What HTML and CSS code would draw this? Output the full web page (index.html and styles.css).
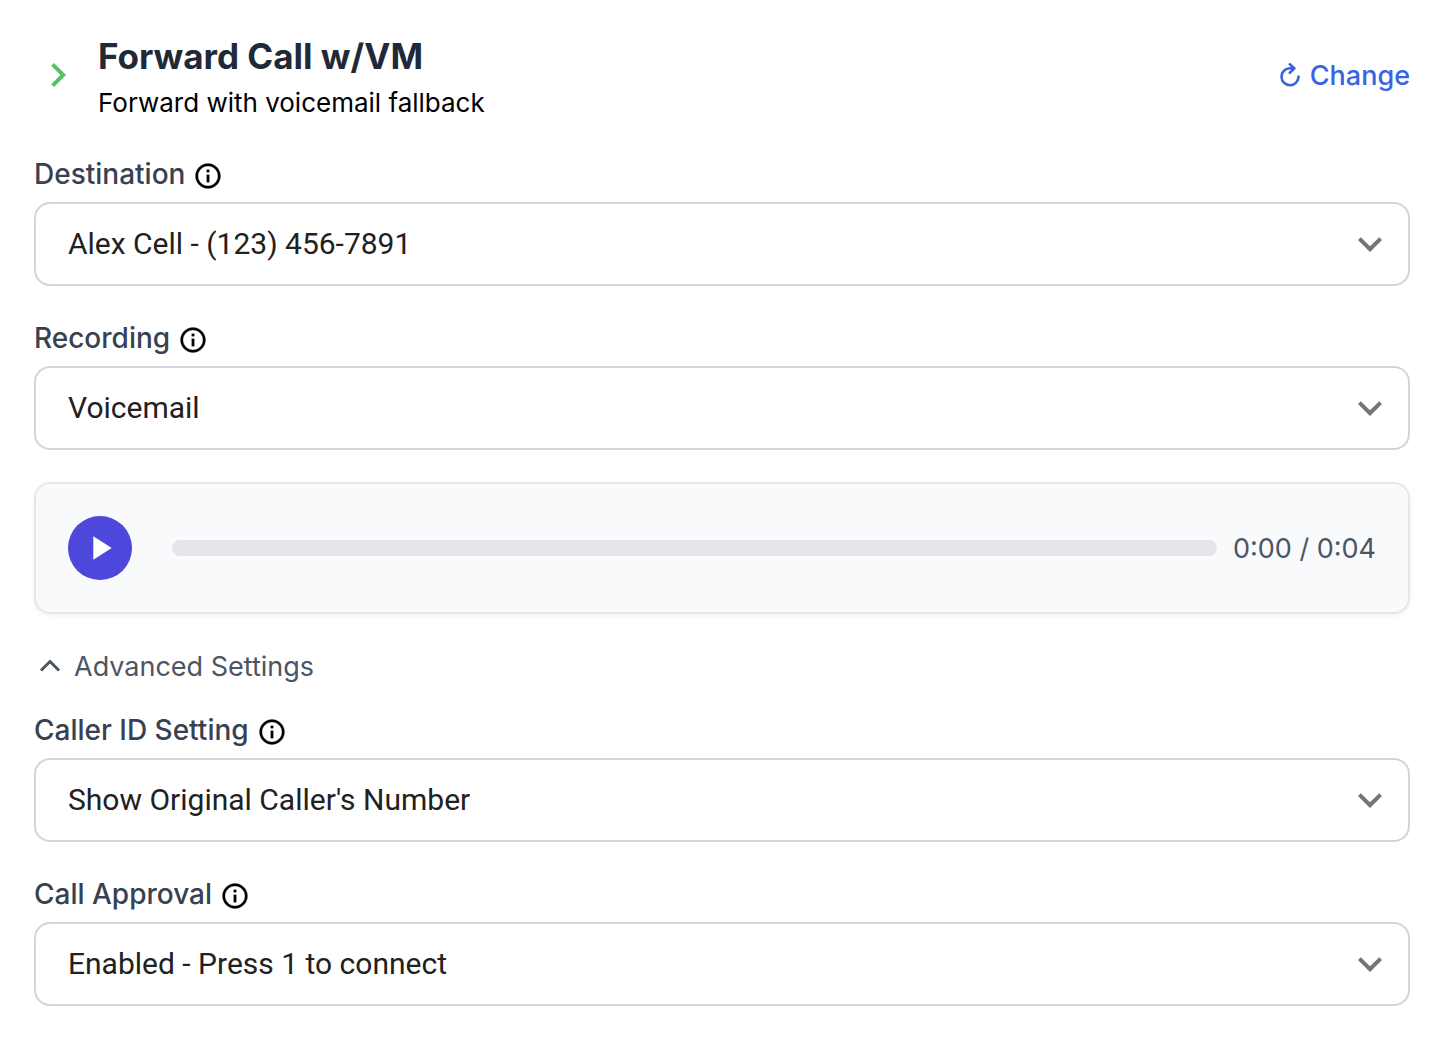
FILE: index.html
```html
<!DOCTYPE html>
<html lang="en">
<head>
    <meta charset="UTF-8">
    <meta name="viewport" content="width=device-width, initial-scale=1.0">
    <title>Forward Call w/VM</title>
    <link rel="stylesheet" href="styles.css">
</head>
<body>
    <!-- Shared icons -->
    <svg class="sprite" aria-hidden="true">
        <symbol id="icon-info" viewBox="0 0 24 24">
            <path d="M11 7h2v2h-2zm0 4h2v6h-2zm1-9C6.48 2 2 6.48 2 12s4.48 10 10 10 10-4.48 10-10S17.52 2 12 2zm0 18c-4.41 0-8-3.59-8-8s3.59-8 8-8 8 3.59 8 8-3.59 8-8 8z"/>
        </symbol>
        <symbol id="icon-expand" viewBox="0 0 24 24">
            <path d="M16.59 8.59L12 13.17 7.41 8.59 6 10l6 6 6-6z"/>
        </symbol>
    </svg>

    <main class="panel">
        <!-- Header -->
        <header class="header">
            <svg class="header-arrow" viewBox="0 0 24 24" aria-hidden="true"><path d="M10 6L8.59 7.41 13.17 12l-4.58 4.59L10 18l6-6z"/></svg>
            <div class="header-text">
                <h1>Forward Call w/VM</h1>
                <p>Forward with voicemail fallback</p>
            </div>
            <button class="change-button" type="button">
                <svg viewBox="0 0 20 24" aria-hidden="true"><path d="M18.5 13.5A8.5 8.5 0 1 1 10 5.2H14.2M9.8 1.3L14.4 5.4L9.8 9.8"/></svg>
                Change
            </button>
        </header>

        <form class="settings">
            <div class="field">
                <div class="field-label">
                    <label for="destination">Destination</label>
                    <svg class="info-icon" aria-hidden="true"><use href="#icon-info"/></svg>
                </div>
                <div class="select-box">
                    <select id="destination">
                        <option>Alex Cell - (123) 456-7891</option>
                    </select>
                    <svg class="select-arrow" aria-hidden="true"><use href="#icon-expand"/></svg>
                </div>
            </div>

            <div class="field">
                <div class="field-label">
                    <label for="recording">Recording</label>
                    <svg class="info-icon" aria-hidden="true"><use href="#icon-info"/></svg>
                </div>
                <div class="select-box">
                    <select id="recording">
                        <option>Voicemail</option>
                    </select>
                    <svg class="select-arrow" aria-hidden="true"><use href="#icon-expand"/></svg>
                </div>
            </div>

            <!-- Recording player -->
            <div class="player">
                <button class="play-button" type="button" aria-label="Play">
                    <svg viewBox="0 0 24 24" aria-hidden="true"><path d="M8 5v14l11-7z"/></svg>
                </button>
                <input class="seek" type="range" min="0" max="4" value="0" aria-label="Seek">
                <span class="time">0:00 / 0:04</span>
            </div>

            <!-- Advanced settings -->
            <section class="advanced">
                <button class="advanced-toggle" type="button" aria-expanded="true">
                    <svg viewBox="0 0 32 32" aria-hidden="true"><path d="M7 20.5l9-9 9 9"/></svg>
                    Advanced Settings
                </button>

                <div class="field">
                    <div class="field-label">
                        <label for="caller-id">Caller ID Setting</label>
                        <svg class="info-icon" aria-hidden="true"><use href="#icon-info"/></svg>
                    </div>
                    <div class="select-box">
                        <select id="caller-id">
                            <option>Show Original Caller's Number</option>
                        </select>
                        <svg class="select-arrow" aria-hidden="true"><use href="#icon-expand"/></svg>
                    </div>
                </div>
            </section>

            <div class="field">
                <div class="field-label">
                    <label for="approval">Call Approval</label>
                    <svg class="info-icon" aria-hidden="true"><use href="#icon-info"/></svg>
                </div>
                <div class="select-box">
                    <select id="approval">
                        <option>Enabled - Press 1 to connect</option>
                    </select>
                    <svg class="select-arrow" aria-hidden="true"><use href="#icon-expand"/></svg>
                </div>
            </div>
        </form>
    </main>
</body>
</html>
```
FILE: styles.css
```css
/* Global Styles */
* {
    box-sizing: border-box;
}

body {
    margin: 0;
    background: #fff;
    color: #000;
    font-family: 'Inter', sans-serif;
    font-size: 28px;
}

button {
    border: none;
    background: none;
    padding: 0;
    font: inherit;
    cursor: pointer;
}

.sprite {
    display: none;
}

.panel {
    padding: 32px 36px 32px 34px;
}

/* Header */
.header {
    display: flex;
    align-items: center;
    gap: 16px;
    margin-bottom: 36px;
}

.header-arrow {
    width: 48px;
    height: 48px;
    flex: none;
    fill: #58c168;
}

.header-text {
    flex: 1;
}

.header h1 {
    margin: 0 0 8px;
    font-size: 35px;
    font-weight: 700;
    line-height: 48px;
    color: #1f2937;
}

.header p {
    margin: 0;
    font-size: 26px;
    line-height: 30px;
}

.change-button {
    display: flex;
    align-items: center;
    gap: 10px;
    color: #3763e4;
    font-size: 27px;
    font-weight: 500;
}

.change-button svg {
    width: 20px;
    height: 24px;
    fill: none;
    stroke: #3763e4;
    stroke-width: 2.6;
    stroke-linecap: round;
    stroke-linejoin: round;
}

/* Fields */
.settings {
    display: flex;
    flex-direction: column;
    gap: 32px;
}

.field {
    display: flex;
    flex-direction: column;
    gap: 8px;
}

.field-label {
    display: flex;
    align-items: center;
    gap: 8px;
    height: 40px;
    color: #374151;
    font-weight: 500;
}

.info-icon {
    width: 30px;
    height: 30px;
    margin-top: 4px;
    fill: #000;
    stroke: #000;
    stroke-width: 0.2;
}

.select-box {
    position: relative;
}

.select-box select {
    display: block;
    width: 100%;
    height: 84px;
    padding: 0 80px 2px 32px;
    border: 2px solid #d1d5db;
    border-radius: 16px;
    appearance: none;
    background: #fff;
    color: #212121;
    font-family: 'Roboto', sans-serif;
    font-size: 30px;
}

.select-arrow {
    position: absolute;
    top: 18px;
    right: 16px;
    width: 48px;
    height: 48px;
    fill: #757575;
    pointer-events: none;
}

/* Player */
.player {
    display: flex;
    align-items: center;
    padding: 32px;
    border: 2px solid #e5e7eb;
    border-radius: 16px;
    background: #f9fafc;
    box-shadow: 0 2px 4px rgba(0, 0, 0, 0.05);
}

.play-button {
    display: flex;
    align-items: center;
    justify-content: center;
    width: 64px;
    height: 64px;
    margin-right: 40px;
    flex: none;
    border-radius: 50%;
    background: #4e47dc;
}

.play-button svg {
    width: 40px;
    height: 40px;
    fill: #fff;
}

.seek {
    flex: 1;
    min-width: 0;
    height: 16px;
    margin: 0 16px 0 0;
    appearance: none;
    border-radius: 8px;
    background: #e5e6ea;
    cursor: pointer;
}

.seek::-webkit-slider-thumb {
    appearance: none;
    width: 0;
    height: 16px;
}

.time {
    color: #4b5563;
    font-size: 27px;
}

/* Advanced Settings */
.advanced {
    display: flex;
    flex-direction: column;
    gap: 24px;
}

.advanced-toggle {
    display: flex;
    align-items: center;
    align-self: flex-start;
    gap: 8px;
    height: 40px;
    color: #4b5563;
    font-size: 27px;
}

.advanced-toggle svg {
    width: 32px;
    height: 32px;
    fill: none;
    stroke: #4b5563;
    stroke-width: 3;
}
```
